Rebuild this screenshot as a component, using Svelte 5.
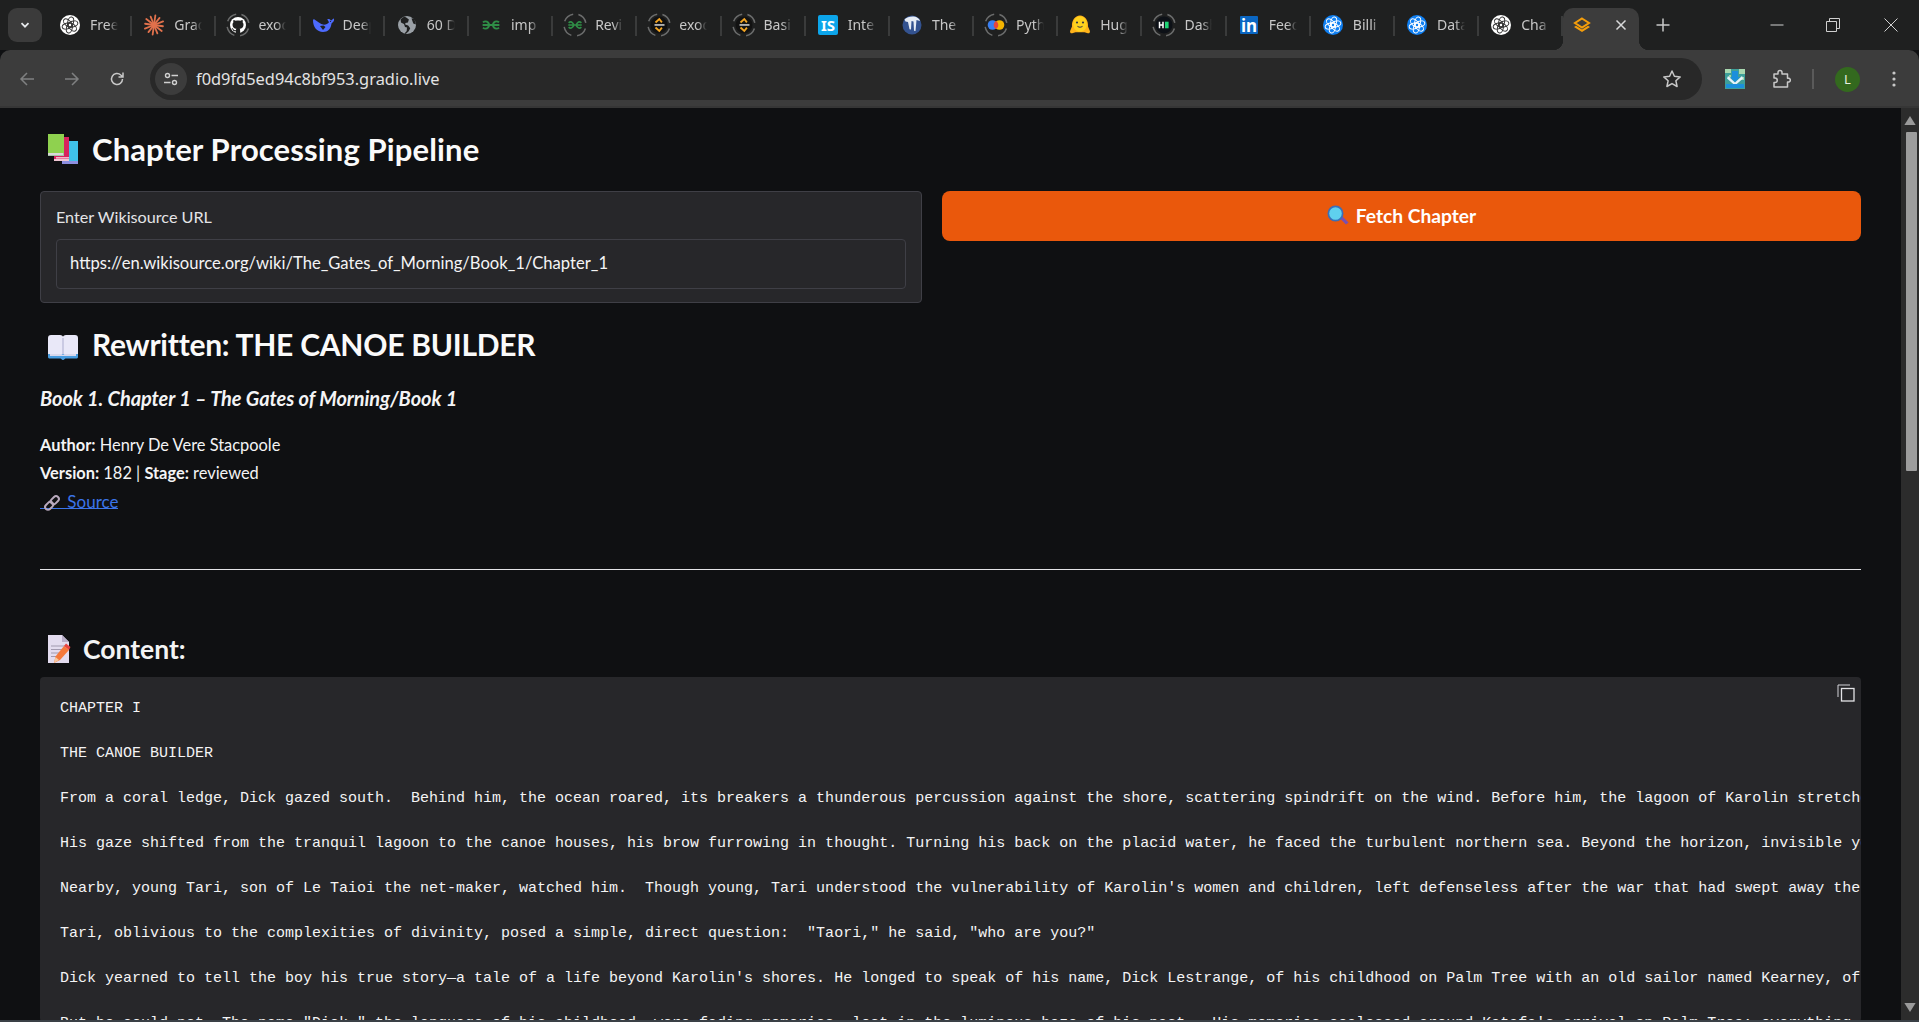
<script>
  const tabs = [
    { i: 'oai', t: 'Free' }, { i: 'burst', t: 'Grad' }, { i: 'gh', t: 'exod' }, { i: 'whale', t: 'Deep' },
    { i: 'globe', t: '60 D' }, { i: 'gfg', t: 'imp' }, { i: 'gfgr', t: 'Revi' }, { i: 'exo', t: 'exod' },
    { i: 'exo', t: 'Basi' }, { i: 'is', t: 'Inte' }, { i: 'wiki', t: 'The' }, { i: 'colab', t: 'Pyth' },
    { i: 'hf', t: 'Hug' }, { i: 'hm', t: 'Dash' }, { i: 'li', t: 'Feed' }, { i: 'oaib', t: 'Billi' },
    { i: 'oaib', t: 'Data' }, { i: 'oai', t: 'Cha' }
  ];
  const lines = [
    'CHAPTER I', '',
    'THE CANOE BUILDER', '',
    "From a coral ledge, Dick gazed south.  Behind him, the ocean roared, its breakers a thunderous percussion against the shore, scattering spindrift on the wind. Before him, the lagoon of Karolin stretched", '',
    "His gaze shifted from the tranquil lagoon to the canoe houses, his brow furrowing in thought. Turning his back on the placid water, he faced the turbulent northern sea. Beyond the horizon, invisible yet", '',
    "Nearby, young Tari, son of Le Taioi the net-maker, watched him.  Though young, Tari understood the vulnerability of Karolin's women and children, left defenseless after the war that had swept away the men", '',
    'Tari, oblivious to the complexities of divinity, posed a simple, direct question:  "Taori," he said, "who are you?"', '',
    "Dick yearned to tell the boy his true story\u2014a tale of a life beyond Karolin's shores. He longed to speak of his name, Dick Lestrange, of his childhood on Palm Tree with an old sailor named Kearney, of", '',
    "But he could not. The name \"Dick,\" the language of his childhood, were fading memories, lost in the luminous haze of his past.  His memories coalesced around Katafa's arrival on Palm Tree; everything"
  ];
  const text = lines.join('\n');
  const knot = [0, 60, 120, 180, 240, 300];
  const rays = [0, 30, 60, 90, 120, 150, 180, 210, 240, 270, 300, 330];
</script>

{#snippet ring()}
  <circle cx="12" cy="12" r="11" fill="none" stroke="#6b6c6c" stroke-width="1.5" stroke-dasharray="11.5 5.8" transform="rotate(-72 12 12)" />
{/snippet}

{#snippet gfgMark(s)}
  <g fill="none" stroke="#2f8d46" stroke-width={s}>
    <path d="M12 12H3.600M4 9.400a3.600 3.600 0 1 1 0 5.200" />
    <path d="M12 12h8.400M20 9.400a3.600 3.600 0 1 0 0 5.200" />
  </g>
{/snippet}

{#snippet favicon(i)}
  <svg class="fav" viewBox="0 0 24 24" width="24" height="24" aria-hidden="true">
    {#if i === 'oai' || i === 'oaib'}
      <circle cx="12" cy="12" r="10" fill={i === 'oai' ? '#fff' : '#0f7ff2'} />
      <g fill="none" stroke={i === 'oai' ? '#333' : '#fff'} stroke-width=".95">
        {#each knot as a}
          <ellipse cx="12" cy="8.900" rx="2.900" ry="5" transform="rotate({a + 12} 12 12)" />
        {/each}
      </g>
    {:else if i === 'burst'}
      <g stroke="#e0714c" stroke-width="1.800" stroke-linecap="round">
        {#each rays as a, n}
          <line x1="12" y1="12" x2="12" y2={n % 2 ? 3 : 2.200} transform="rotate({a + 8} 12 12)" />
        {/each}
      </g>
    {:else if i === 'gh'}
      {@render ring()}
      <circle cx="12" cy="12" r="8" fill="#fff" />
      <g transform="translate(3.400 3.400) scale(1.075)">
        <path fill="#1f2020" d="M5.470 15.590c.4.070.55-.17.55-.38 0-.19-.01-.82-.01-1.490-2.010.37-2.530-.49-2.690-.94-.09-.23-.48-.94-.82-1.130-.28-.15-.68-.52-.01-.53.63-.01 1.080.58 1.230.82.72 1.210 1.870.87 2.330.66.07-.52.28-.87.51-1.070-1.780-.2-3.640-.89-3.640-3.950 0-.87.31-1.590.82-2.150-.08-.2-.36-1.020.08-2.120 0 0 .67-.21 2.200.82.64-.18 1.320-.27 2-.27s1.360.09 2 .27c1.530-1.040 2.200-.82 2.200-.82.44 1.100.16 1.920.08 2.120.51.56.82 1.270.82 2.150 0 3.070-1.870 3.750-3.650 3.950.29.25.54.73.54 1.480 0 1.070-.01 1.930-.01 2.200 0 .21.15.46.55.38z" />
      </g>
    {:else if i === 'whale'}
      <path fill="#4d6bfe" d="M2 7.500C2 14 6 19 12 19c5 0 8-3.500 8.500-8.500l2-2c.8-1 .8-3 0-3l-2.300 2C19 6 17.500 5.500 16.300 6.300l1.700 3c-1 1.500-3 2.500-5 2.500C9 11 6.500 8.500 3.500 6.500c-.6-.5-1.500 0-1.500 1z" />
      <path fill="#1f2020" d="M9 13l3.500-.5 2 1.500-2.500 3z" />
      <circle cx="19.500" cy="8.300" r=".6" fill="#1f2020" />
    {:else if i === 'globe'}
      <circle cx="12" cy="12" r="9" fill="#9aa0a6" />
      <path fill="#1f2020" d="M9 3.800 5.600 6.300 6 9.500l3 1.500 1 3 2 .5-.3 3.500-2 2.200 1 .8 3-2.700 1.500-3-2-2.800-3-1 .2-1.500 2.500-.5 1-3-3-2.200zM16.500 5.500l1.800 5 2.500 1-.2-2.500-2-3.500z" />
    {:else if i === 'gfg'}
      {@render gfgMark(1.900)}
    {:else if i === 'gfgr'}
      {@render ring()}
      <g transform="translate(2.400 2.400) scale(.8)">{@render gfgMark(2)}</g>
    {:else if i === 'exo'}
      {@render ring()}
      <circle cx="12" cy="12" r="8.500" fill="#121212" />
      <path d="M8.500 9.500 12.300 6l2.600 3.400" fill="none" stroke="#f5a623" stroke-width="1.800" />
      <path d="M8.500 14.500 12.300 18l2.600-3.400" fill="none" stroke="#f5a623" stroke-width="1.800" />
      <rect x="7.500" y="11.200" width="10" height="1.500" fill="#d8d8d8" />
    {:else if i === 'is'}
      <rect x="2" y="2" width="20" height="20" rx="2" fill="#0ca5ea" />
      <text x="12" y="17.500" text-anchor="middle" class="svgtxt">IS</text>
    {:else if i === 'wiki'}
      <circle cx="12" cy="12" r="9.500" fill="#33528f" />
      <path fill="#e6ecf5" d="M4.500 6.500C7 3.500 14 2.500 17 4.500c1.500.8 2.500 1.800 3 3.500l-3.500-1-1 11-1.500-.2-.5-9.300-2-.6-.5 8.600-1.500-.2L8 9 5.500 8.500z" />
    {:else if i === 'colab'}
      {@render ring()}
      <circle cx="8.500" cy="12" r="4.800" fill="#3a7ff0" />
      <circle cx="15.500" cy="12" r="4.800" fill="#f4b400" />
      <path d="M12 7.900a4.800 4.800 0 0 1 0 8.200 4.800 4.800 0 0 1 0-8.200z" fill="#e8453c" />
    {:else if i === 'hf'}
      <path fill="#ffb31a" d="M5 20c-2 1-3.500-.5-2.800-2.300L4 13.500C3.500 7.500 7 2.500 12 2.500s8.500 5 8 11l1.800 4.200c.7 1.800-.8 3.300-2.800 2.300l-2.500-.8H7.500z" />
      <path fill="#ffd21e" d="M12 3.500c4 0 6.800 3.500 6.800 8s-3 7-6.800 7-6.800-2.500-6.800-7 2.800-8 6.800-8z" />
      <circle cx="9" cy="9.500" r="1.100" fill="#3a3b45" />
      <circle cx="15" cy="9.500" r="1.100" fill="#3a3b45" />
      <path d="M9 12.500c.8 1.500 5.200 1.500 6 0-.6 3-5.400 3-6 0z" fill="#3a3b45" />
    {:else if i === 'hm'}
      {@render ring()}
      <circle cx="12" cy="12" r="8.500" fill="#0d1117" />
      <path d="M7.500 8.700v6.600M11 8.700v6.600M7.500 12H11" stroke="#fff" stroke-width="1.500" fill="none" />
      <rect x="13" y="8.700" width="3.600" height="6.600" fill="#1fd475" />
    {:else if i === 'li'}
      <rect x="3" y="3" width="18" height="18" rx="1" fill="#0a66c2" />
      <text x="12" y="18.500" text-anchor="middle" class="svgtxt big">in</text>
    {:else if i === 'stack'}
      <g fill="none" stroke="#f59e0b" stroke-width="2" stroke-linejoin="miter">
        <path d="M12 5.500 19 10l-7 4.500L5 10z" />
      </g>
      <path d="M4 14l2-1.200 6 3.800 6-3.800 2 1.200-8 5z" fill="#f59e0b" />
    {/if}
  </svg>
{/snippet}

{#snippet booksIcon()}
  <svg class="emoji" viewBox="0 0 32 30" width="32" height="30" aria-hidden="true">
    <rect x="15" y="7" width="16" height="23" fill="#8d8fe0" />
    <rect x="16" y="7" width="15" height="20" fill="#3fc1e8" />
    <rect x="7" y="3" width="15" height="24" fill="#f1c7d4" />
    <rect x="7" y="3" width="15" height="22" fill="#d8235f" />
    <rect x="9" y="23" width="13" height="1.600" fill="#f3b6ca" />
    <rect x="1" y="0" width="16" height="22" fill="#a4c4a8" />
    <rect x="1" y="0" width="16" height="19" fill="#8fd14f" />
    <rect x="1" y="19" width="15" height="2" fill="#d8d8d8" />
  </svg>
{/snippet}

{#snippet openBook()}
  <svg class="emoji bookic" viewBox="0 0 32 32" width="32" height="32" aria-hidden="true">
    <path d="M1 8c0-2 1-3 3-3h9c2 0 3 1 3 2 0-1 1-2 3-2h9c2 0 3 1 3 3v19H1z" fill="#e9e8f8" />
    <path d="M16 8v19" stroke="#b6b6d6" stroke-width="1.200" />
    <path d="M1 24v3c0 1 1 1.500 2 1.500h10.500c1 0 1 1.500 2.500 1.500s1.500-1.500 2.500-1.500H29c1 0 2-.5 2-1.500v-3z" fill="#4a9de0" />
    <path d="M3 24h11.500l1.500 1 1.500-1H29v2H3z" fill="#d9d8ec" />
  </svg>
{/snippet}

{#snippet memoIcon()}
  <svg class="emoji" viewBox="0 0 24 30" width="24" height="30" aria-hidden="true">
    <path d="M1 1h14l7 7v21H1z" fill="#e3dcef" />
    <path d="M15 1v7h7z" fill="#b9aec9" />
    <path d="M4 12h14M4 15.500h14M4 19h10M4 22.500h8" stroke="#a29ab0" stroke-width="1.200" />
    <path d="M7 29l1.500-6.500L17 12l5 4-9 10z" fill="#f5793b" />
    <path d="M17 12l2-2.500 4.500 3.500-1.500 3z" fill="#e8433f" />
    <path d="M7 29l1.500-6 3.500 3z" fill="#f7c9a0" />
  </svg>
{/snippet}

{#snippet lensIcon()}
  <svg class="lens" viewBox="0 0 22 20" width="22" height="20" aria-hidden="true">
    <path d="M13 13.500l6 6 2.500-2-6-6z" fill="#7a4fb0" />
    <circle cx="8.500" cy="8.500" r="8" fill="#3b6fb8" />
    <circle cx="8.500" cy="8.500" r="6.300" fill="#5fd0ee" />
  </svg>
{/snippet}

<div class="screen">
  <header class="strip">
    <button class="listbtn" aria-label="Search tabs">
      <svg viewBox="0 0 12 12" width="12" height="12"><path d="M2.500 4.200 6 7.700l3.500-3.500" fill="none" stroke="#e8eaed" stroke-width="1.700" /></svg>
    </button>
    <div class="tabs">
      {#each tabs as tab}
        <div class="tab">
          {@render favicon(tab.i)}
          <span class="tabtext">{tab.t}</span>
        </div>
      {/each}
      <div class="tab active">
        {@render favicon('stack')}
        <svg class="closex" viewBox="0 0 12 12" width="12" height="12" aria-hidden="true"><path d="M1.500 1.500l9 9M10.500 1.500l-9 9" stroke="#d8d9da" stroke-width="1.500" /></svg>
      </div>
    </div>
    <svg class="plus" viewBox="0 0 14 14" width="14" height="14" aria-hidden="true"><path d="M7 .5v13M.5 7h13" stroke="#c7c7c7" stroke-width="1.500" /></svg>
    <div class="winctl">
      <svg viewBox="0 0 14 14" width="14" height="14" aria-hidden="true"><path d="M.5 7h13" stroke="#d0d0d0" stroke-width="1" /></svg>
      <svg viewBox="0 0 14 14" width="14" height="14" aria-hidden="true"><path d="M.5 3.500h10v10H.5zM3.500 3.500V.5h10v10h-3" fill="none" stroke="#d0d0d0" stroke-width="1" /></svg>
      <svg class="winclose" viewBox="0 0 14 14" width="14" height="14" aria-hidden="true"><path d="M.5.5l13 13M13.500.5l-13 13" stroke="#d0d0d0" stroke-width="1" /></svg>
    </div>
  </header>

  <nav class="toolbar">
    <svg class="tb" viewBox="0 0 16 16" width="16" height="16" aria-hidden="true"><path d="M15 8H2M8 2 2 8l6 6" fill="none" stroke="#7f8081" stroke-width="1.500" /></svg>
    <svg class="tb" viewBox="0 0 16 16" width="16" height="16" aria-hidden="true"><path d="M1 8h13M8 2l6 6-6 6" fill="none" stroke="#7f8081" stroke-width="1.500" /></svg>
    <svg class="tb" viewBox="0 0 16 16" width="16" height="16" aria-hidden="true"><path d="M13.500 8a5.500 5.500 0 1 1-1.700-4L14 6M14 1.500V6H9.500" fill="none" stroke="#c8c8c8" stroke-width="1.500" /></svg>
    <div class="omni">
      <span class="siteinfo">
        <svg viewBox="0 0 16 16" width="16" height="16" aria-hidden="true">
          <circle cx="4.500" cy="4.500" r="2" fill="none" stroke="#d0d0d0" stroke-width="1.400" />
          <circle cx="11.500" cy="11.500" r="2" fill="none" stroke="#d0d0d0" stroke-width="1.400" />
          <path d="M8.500 4.500H15M1 11.500h6.500" stroke="#d0d0d0" stroke-width="1.400" />
        </svg>
      </span>
      <span class="url">f0d9fd5ed94c8bf953.gradio.live</span>
      <svg class="star" viewBox="0 0 20 20" width="20" height="20" aria-hidden="true"><path d="M10 2l2.400 5.300 5.800.6-4.300 3.900 1.200 5.700-5.100-2.900-5.100 2.900 1.200-5.700L1.800 7.900l5.800-.6z" fill="none" stroke="#c8c8c8" stroke-width="1.500" stroke-linejoin="round" /></svg>
    </div>
    <svg class="ext" viewBox="0 0 20 20" width="20" height="20" aria-hidden="true">
      <rect width="20" height="20" fill="#3e9f9a" />
      <path d="M0 0h6v4H0zM14 0h6v5h-6zM4 6h2v3H4zM16 8h3v3h-3z" fill="#a8d8b0" />
      <path d="M7 2h6v6h2l-5 5-5-5h2z" fill="#1b8fdc" />
      <path d="M3 7l7 6.500L17 7l1 2.500-8 7-8-7z" fill="#e6f2fa" />
      <path d="M1 15h18v4H1z" fill="#1b8fdc" />
    </svg>
    <svg class="puzzle" viewBox="0 0 20 20" width="20" height="20" aria-hidden="true"><path d="M3 5h4V3.500a2 2 0 0 1 4 0V5h5.500v4.200H18a2 2 0 0 1 0 3.800h-1.500V18H3v-4.500h1a2 2 0 0 0 0-4.500H3z" fill="none" stroke="#c8c8c8" stroke-width="1.500" stroke-linejoin="round" /></svg>
    <span class="tbsep"></span>
    <span class="avatar">L</span>
    <svg class="dots" viewBox="0 0 4 16" width="4" height="16" aria-hidden="true"><circle cx="2" cy="2" r="1.600" fill="#c8c8c8" /><circle cx="2" cy="8" r="1.600" fill="#c8c8c8" /><circle cx="2" cy="14" r="1.600" fill="#c8c8c8" /></svg>
  </nav>

  <div class="viewport">
    <main class="page">
      <h1 class="h1">{@render booksIcon()}<span>Chapter Processing Pipeline</span></h1>
      <section class="row">
        <div class="panel">
          <label class="lab" for="u">Enter Wikisource URL</label>
          <input id="u" class="inp" value="https://en.wikisource.org/wiki/The_Gates_of_Morning/Book_1/Chapter_1" />
        </div>
        <button class="fetch">{@render lensIcon()}<span>Fetch Chapter</span></button>
      </section>
      <h2 class="h2">{@render openBook()}<span>Rewritten: THE CANOE BUILDER</span></h2>
      <h3 class="sub">Book 1. Chapter 1 – The Gates of Morning/Book 1</h3>
      <p class="meta"><strong>Author:</strong> Henry De Vere Stacpoole</p>
      <p class="meta"><strong>Version:</strong> 182 | <strong>Stage:</strong> reviewed</p>
      <p class="meta srcline"><a class="src" href="#source"><svg class="linkic" viewBox="0 0 16 16" width="18" height="18" aria-hidden="true"><g fill="none" stroke="#b9a9bd" stroke-width="1.800"><rect x="1.500" y="8" width="8" height="5" rx="2.500" transform="rotate(-45 5.500 10.500)" /><rect x="6.500" y="3" width="8" height="5" rx="2.500" transform="rotate(-45 10.500 5.500)" /></g></svg> Source</a></p>
      <hr class="rule" />
      <h3 class="ctitle">{@render memoIcon()}<span>Content:</span></h3>
      <div class="codebox">
        <svg class="copy" viewBox="0 0 18 18" width="18" height="18" aria-hidden="true"><path d="M1 13V1h12" fill="none" stroke="#d4d4d8" stroke-width="1" /><rect x="4.500" y="4.500" width="12.500" height="12.500" fill="none" stroke="#e4e4e7" stroke-width="1.300" /></svg>
        <pre class="code">{text}</pre>
      </div>
    </main>
    <aside class="scroll">
      <svg class="arrow" viewBox="0 0 10 8" width="12" height="9" aria-hidden="true"><path d="M5 0l5 8H0z" fill="#9a9a9a" /></svg>
      <div class="thumbzone"><div class="thumb"></div></div>
      <svg class="arrow" viewBox="0 0 10 8" width="12" height="9" aria-hidden="true"><path d="M5 8 0 0h10z" fill="#9a9a9a" /></svg>
    </aside>
  </div>
  <div class="taskline"></div>
</div>

<style>
  :global(body) { margin: 0; background: #0f1012; }
  .screen { width: 1919px; height: 1022px; display: flex; flex-direction: column; overflow: hidden; background: #0f1012; }

  .strip { height: 50px; flex: none; background: #1f2020; display: flex; align-items: flex-end; position: relative; }
  .listbtn { width: 34px; height: 34px; margin: 0 6px 8px 8px; border: 0; padding: 0; border-radius: 9px; background: #3b3b3b; display: flex; align-items: center; justify-content: center; }
  .tabs { display: flex; align-items: stretch; height: 42px; }
  .tab { width: 84.2px; flex: none; box-sizing: border-box; padding-left: 10px; display: flex; align-items: center; gap: 8px; position: relative; padding-bottom: 8px; }
  .tab::after { content: ""; position: absolute; right: 0; top: 8px; width: 2px; height: 20px; background: #3a3b3b; }
  .fav { flex: none; }
  .svgtxt { font: 700 15px "Noto Sans", sans-serif; fill: #fff; }
  .svgtxt.big { font-size: 17px; }
  .tabtext { font: 400 14px/18px "Noto Sans", sans-serif; color: #c7c7c7; width: 28px; overflow: hidden; white-space: nowrap; flex: none; -webkit-mask-image: linear-gradient(90deg, #000 65%, transparent); mask-image: linear-gradient(90deg, #000 65%, transparent); }
  .tab.active { width: 76px; background: #3c3c3c; border-radius: 10px 10px 0 0; padding: 0 0 8px 7px; gap: 21px; }
  .tab.active::after, .tab.active::before { content: ""; position: absolute; bottom: 0; top: auto; width: 10px; height: 10px; background: radial-gradient(circle at 0 0, transparent 10px, #3c3c3c 10.500px); }
  .tab.active::before { left: -10px; }
  .tab.active::after { right: -10px; background: radial-gradient(circle at 100% 0, transparent 10px, #3c3c3c 10.500px); }
  .closex { flex: none; }
  .plus { margin: 0 0 18px 17px; flex: none; }
  .winctl { margin-left: auto; display: flex; gap: 42px; padding: 0 21px 18px 0; align-items: center; }
  .winclose { margin-left: 2px; }

  .toolbar { height: 58px; flex: none; background: #3c3c3c; border-radius: 10px 10px 0 0; display: flex; align-items: center; box-sizing: border-box; padding: 2px 0 0 19px; border-bottom: 2px solid #363636; }
  .tb { flex: none; margin-right: 29px; }
  .omni { width: 1552px; height: 42px; margin-left: -4px; flex: none; background: #282828; border-radius: 21px; display: flex; align-items: center; box-sizing: border-box; padding: 0 20px 0 5px; }
  .siteinfo { width: 32px; height: 32px; border-radius: 50%; background: #3c3c3c; display: flex; align-items: center; justify-content: center; flex: none; }
  .url { font: 400 16.400px/20px "Noto Sans", sans-serif; color: #e3e3e3; margin-left: 9px; }
  .star { margin-left: auto; }
  .ext { margin-left: 23px; flex: none; }
  .puzzle { margin-left: 26px; flex: none; }
  .tbsep { width: 2px; height: 20px; background: #5a5a5a; margin-left: 21px; flex: none; }
  .avatar { width: 25px; height: 25px; border-radius: 50%; background: #33691e; color: #e8f0e0; font: 400 13px/25px "Noto Sans", sans-serif; text-align: center; margin-left: 21px; flex: none; }
  .dots { margin-left: 32px; flex: none; }

  .viewport { flex: 1; min-height: 0; display: flex; overflow: hidden; }
  .page { flex: 1; min-width: 0; box-sizing: border-box; padding: 23px 40px 0; color: #f4f4f5; font-family: Lato, sans-serif; overflow: hidden; }
  .scroll { width: 18px; flex: none; background: #2c2c2c; display: flex; flex-direction: column; align-items: center; padding: 8px 0; box-sizing: border-box; }
  .thumbzone { flex: 1; width: 100%; padding: 7px 2px 0 5px; box-sizing: border-box; }
  .thumb { height: 339px; background: #9d9d9d; border-radius: 1px; }
  .arrow { flex: none; }
  .taskline { height: 2px; flex: none; background: #3a4046; }

  .h1, .h2 { margin: 0; font-weight: 700; display: flex; align-items: center; color: #fafafa; }
  .h1 { font-size: 31px; line-height: 36px; height: 36px; gap: 13px; padding-left: 7px; letter-spacing: .13px; }
  .emoji { flex: none; }
  .row { display: grid; grid-template-columns: 882px 919px; gap: 20px; align-items: start; margin-top: 24px; }
  .panel { box-sizing: border-box; height: 112px; background: #27272a; border: 1px solid #3f3f46; border-radius: 4px; padding: 14px 15px 0; display: flex; flex-direction: column; }
  .lab { font-size: 16.200px; line-height: 22px; color: #e4e4e7; }
  .inp { box-sizing: border-box; height: 50px; width: 100%; margin-top: 11px; padding: 0 13px 2px; background: #27272a; border: 1px solid #3f3f46; border-radius: 4px; color: #f4f4f5; font: 400 16.600px Lato, sans-serif; outline: none; }
  .fetch { height: 50px; background: #ea580c; border: 0; border-radius: 8px; color: #fff; font: 700 19.200px Lato, sans-serif; display: flex; align-items: center; justify-content: center; gap: 7px; padding: 0 0 2px; }
  .lens { flex: none; }
  .h2 { font-size: 30px; line-height: 36px; height: 36px; gap: 13px; margin-top: 23px; padding-left: 7px; letter-spacing: -.25px; }
  .bookic { margin-top: 3px; }
  .sub { margin: 24px 0 0; font-size: 20px; line-height: 24px; font-style: italic; font-weight: 700; letter-spacing: -.08px; }
  .meta { margin: 0; font-size: 16.400px; line-height: 28px; color: #f4f4f5; }
  .sub + .meta { margin-top: 21px; }
  .srcline { margin-top: 1px; }
  .meta strong { font-weight: 700; }
  .src { color: #3b74e8; font-size: 17px; text-decoration: none; background: linear-gradient(currentColor, currentColor) 0 calc(100% - 3px) / 100% 1px no-repeat; }
  .linkic { vertical-align: -4px; margin: 0 2px 0 3px; }
  .rule { border: 0; border-top: 1px solid #e4e4e7; margin: 53px 0 0; height: 0; }
  .ctitle { margin: 64px 0 0; font-size: 26.500px; line-height: 30px; font-weight: 700; display: flex; align-items: center; gap: 12px; padding-left: 7px; height: 30px; }
  .codebox { margin-top: 13px; position: relative; background: #27272a; border-radius: 4px; height: 345px; overflow: hidden; }
  .copy { position: absolute; right: 6px; top: 7px; }
  .code { margin: 0; padding: 21px 0 0 20px; font: 400 15px/22.5px "Liberation Mono", monospace; color: #f4f4f5; white-space: pre; overflow: hidden; }
</style>
